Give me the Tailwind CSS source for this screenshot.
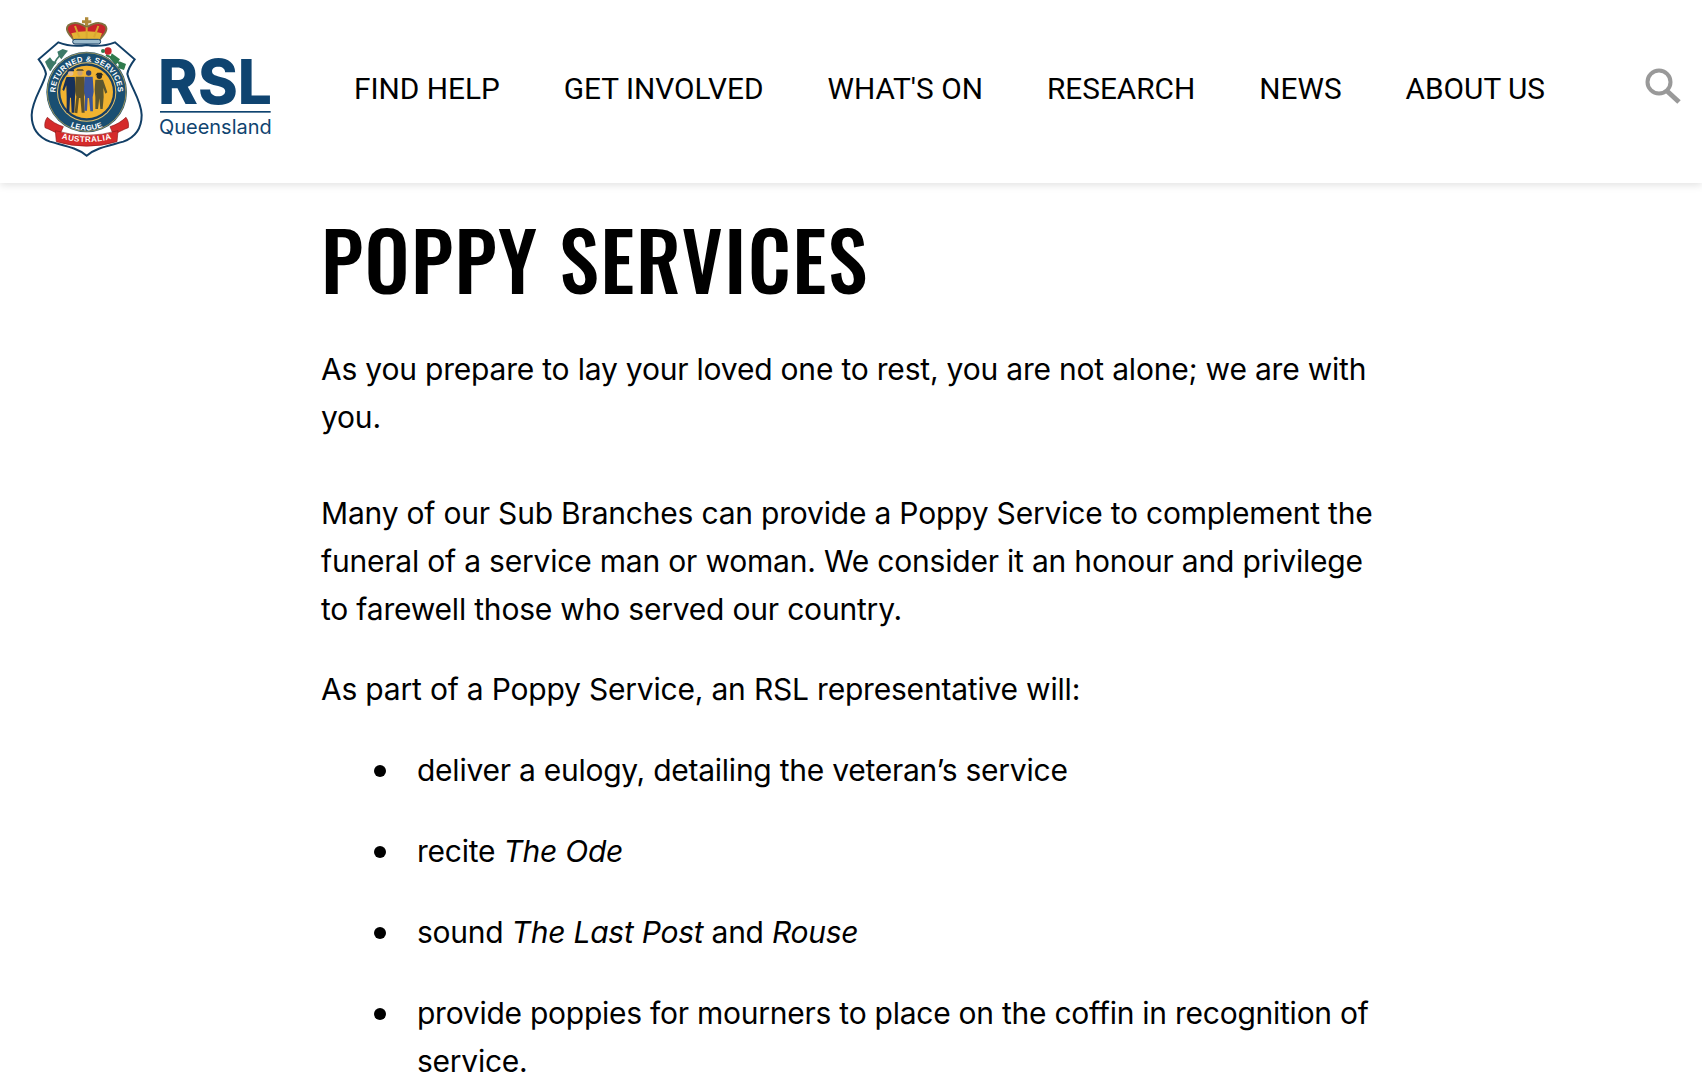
<!DOCTYPE html>
<html lang="en">
<head>
    <meta charset="UTF-8">
    <meta name="viewport" content="width=device-width, initial-scale=1.0">
    <title>Poppy Services - RSL Queensland</title>
    <script src="https://cdn.jsdelivr.net/npm/@tailwindcss/browser@4"></script>
</head>
<body class="bg-white text-black h-[1080px] overflow-hidden font-['Inter',sans-serif]">
    <header class="relative z-10 h-[183px] bg-white flex items-center shadow-[0_2px_8px_rgba(0,0,0,0.12)]">
        <!-- logo: coords are 3x so they line up with the reference crops -->
        <svg class="shrink-0 w-[300px] h-[183px]" viewBox="0 0 900 549">
            <defs>
                <path id="ringTop" d="M168 298 A94 94 0 1 1 352 298"/>
                <path id="ringBottom" d="M163 336 A113 113 0 0 0 357 336"/>
                <path id="ribbon" d="M176 414 Q260 438 344 414"/>
            </defs>
            <!-- crown -->
            <path d="M255 52 h10 v9 h9 v9 h-9 v12 h-10 v-12 h-9 v-9 h9 z" fill="#b08a3a"/>
            <path d="M222 120 C206 102 194 88 205 76 C222 62 245 72 260 82 C275 72 298 62 315 76 C326 88 314 102 298 120 Z" fill="#c8242b" stroke="#80713f" stroke-width="6"/>
            <path d="M214 100 C240 92 280 92 306 100 L298 120 L222 120 Z" fill="#e4b435"/>
            <path d="M260 82 L260 118 M225 78 L238 112 M295 78 L282 112" stroke="#d9a82f" stroke-width="6"/>
            <rect x="218" y="118" width="84" height="14" rx="7" fill="#9dbccd" stroke="#173f63" stroke-width="3"/>
            <!-- shield -->
            <path d="M260 135 C230 140 200 137 175 127 L116 178 C128 194 136 208 138 222 C128 262 96 300 95 345 C95 385 115 412 150 425 C190 437 230 442 260 467 C290 442 330 437 370 425 C405 412 425 385 425 345 C424 300 392 262 382 222 C384 208 392 194 404 178 L345 127 C320 137 290 140 260 135 Z" fill="#fff" stroke="#123f66" stroke-width="6"/>
            <!-- thistle and rose sprays -->
            <path d="M150 212 L170 178 L192 152" stroke="#3d7a68" stroke-width="5" fill="none"/>
            <path d="M135 185 L150 172 L158 182 L170 188 L158 200 L150 212 L142 200 Z" fill="#3d7a68"/>
            <path d="M172 155 L188 147 L204 152 L194 164 L184 178 L176 168 Z" fill="#3d7a68"/>
            <path d="M318 165 L345 178 L372 204" stroke="#2f7a4d" stroke-width="6" fill="none"/>
            <circle cx="324" cy="153" r="11" fill="#c8242b"/>
            <circle cx="309" cy="153" r="6" fill="#2f7a4d"/>
            <path d="M335 160 L360 178 L348 194 L330 176 Z" fill="#2f7a4d"/>
            <path d="M358 184 L378 192 L372 210 L354 204 Z" fill="#2f7a4d"/>
            <!-- roundel -->
            <circle cx="260" cy="276" r="121" fill="#1a4f72"/>
            <circle cx="260" cy="276" r="118" fill="none" stroke="#d9b24a" stroke-width="2"/>
            <circle cx="260" cy="276" r="89" fill="#e9c46a"/>
            <circle cx="260" cy="276" r="86" fill="#173f63"/>
            <circle cx="260" cy="276" r="79" fill="#f2b330"/>
            <text font-family="Liberation Sans" font-weight="700" font-size="23" letter-spacing="1" fill="#fff"><textPath href="#ringTop" startOffset="50%" text-anchor="middle">RETURNED &amp; SERVICES</textPath></text>
            <text font-family="Liberation Sans" font-weight="700" font-size="23" letter-spacing="1" fill="#fff"><textPath href="#ringBottom" startOffset="50%" text-anchor="middle">LEAGUE</textPath></text>
            <!-- four servicemen -->
            <circle cx="212" cy="220" r="8" fill="#e3bb8e"/>
            <rect x="202" y="208" width="20" height="6" rx="2" fill="#16305a"/>
            <g transform="translate(212 231)">
                <path d="M-12 0 L12 0 L15 40 L13 60 L11 107 L3 107 L1 62 L-2 62 L-4 107 L-12 107 L-12 60 L-13 25 L-20 42 L-25 38 L-14 3 Z" fill="#16305a"/>
            </g>
            <circle cx="240" cy="219" r="8" fill="#c89f70"/>
            <path d="M228 213 L252 213 L248 207 L232 207 Z" fill="#6a5a2e"/>
            <g transform="translate(240 230)">
                <path d="M-13 0 L13 0 L16 45 L12 60 L14 108 L5 108 L1 64 L-3 64 L-8 110 L-16 108 L-11 60 L-15 42 Z" fill="#5f5228"/>
            </g>
            <circle cx="266" cy="219" r="8" fill="#2f3f6b"/>
            <g transform="translate(266 230)">
                <path d="M-12 0 L12 0 L15 45 L12 62 L13 104 L5 104 L1 64 L-3 64 L-5 102 L-13 102 L-11 60 L-14 42 Z" fill="#39549a"/>
            </g>
            <circle cx="298" cy="229" r="8" fill="#2a2a22"/>
            <path d="M286 226 L310 226 L304 218 L292 218 Z" fill="#2a2a22"/>
            <g transform="translate(298 239)">
                <path d="M-12 0 L11 0 L24 38 L18 42 L12 24 L13 52 L10 88 L3 88 L0 56 L-4 88 L-12 88 L-12 52 L-14 30 Z" fill="#5c5630"/>
            </g>
            <!-- ribbon -->
            <path d="M142 352 C135 362 133 372 135 383 C150 388 165 398 180 403 L190 380 C170 374 155 364 142 352 Z" fill="#d52b2b" stroke="#8f1d1d" stroke-width="2"/>
            <path d="M378 352 C385 362 387 372 385 383 C370 388 355 398 340 403 L330 380 C350 374 365 364 378 352 Z" fill="#d52b2b" stroke="#8f1d1d" stroke-width="2"/>
            <path d="M166 392 Q260 420 354 392 L351 425 Q260 452 169 425 Z" fill="#d52b2b" stroke="#8f1d1d" stroke-width="2"/>
            <text font-family="Liberation Sans" font-weight="700" font-size="24" letter-spacing="1.5" fill="#fff"><textPath href="#ribbon" startOffset="50%" text-anchor="middle">AUSTRALIA</textPath></text>
            <!-- wordmark -->
            <text x="474" y="312" font-family="Inter" font-weight="800" font-size="184" fill="#0f4470" textLength="342" lengthAdjust="spacingAndGlyphs">RSL</text>
            <rect x="480" y="333" width="332" height="5" fill="#0f4470"/>
            <text x="477" y="403" font-family="Inter" font-size="60" fill="#0f4470" textLength="338" lengthAdjust="spacingAndGlyphs">Queensland</text>
        </svg>
        <nav class="ml-[54px] mb-[6px] flex gap-[64px] text-[29.8px] leading-none font-['Roboto',sans-serif]">
            <a href="#">FIND HELP</a>
            <a href="#">GET INVOLVED</a>
            <a href="#">WHAT'S ON</a>
            <a href="#">RESEARCH</a>
            <a href="#">NEWS</a>
            <a href="#">ABOUT US</a>
        </nav>
        <button class="ml-auto mr-[21px] mb-[12px]">
            <svg class="w-[36px] h-[36px] block" viewBox="0 0 36 36" fill="none" stroke="#999" stroke-width="4">
                <circle cx="14" cy="14" r="11.5"/>
                <path d="M22 23 L34 34" stroke-width="5"/>
            </svg>
        </button>
    </header>

    <main class="pl-[321px] w-[1385px] text-[30px] leading-[48px] tracking-[-0.2px]">
        <h1 class="mt-[20px] mb-[32px] text-[80px] leading-[110px] font-medium tracking-[1.4px] font-['Oswald','Roboto_Condensed',sans-serif]">POPPY SERVICES</h1>
        <p class="mb-[48px]">As you prepare to lay your loved one to rest, you are not alone; we are with you.</p>
        <p class="mb-[32px]">Many of our Sub Branches can provide a Poppy Service to complement the funeral of a service man or woman. We consider it an honour and privilege to farewell those who served our country.</p>
        <p class="mb-[33px]">As part of a Poppy Service, an RSL representative will:</p>
        <ul class="flex flex-col gap-[33px] tracking-[-0.25px]">
            <li class="flex">
                <span class="shrink-0 ml-[53px] mr-[31px] mt-[19px] w-[12px] h-[12px] rounded-full bg-black"></span>
                <div>deliver a eulogy, detailing the veteran’s service</div>
            </li>
            <li class="flex">
                <span class="shrink-0 ml-[53px] mr-[31px] mt-[19px] w-[12px] h-[12px] rounded-full bg-black"></span>
                <div>recite <em>The Ode</em></div>
            </li>
            <li class="flex">
                <span class="shrink-0 ml-[53px] mr-[31px] mt-[19px] w-[12px] h-[12px] rounded-full bg-black"></span>
                <div>sound <em>The Last Post</em> and <em>Rouse</em></div>
            </li>
            <li class="flex">
                <span class="shrink-0 ml-[53px] mr-[31px] mt-[19px] w-[12px] h-[12px] rounded-full bg-black"></span>
                <div>provide poppies for mourners to place on the coffin in recognition of service.</div>
            </li>
        </ul>
    </main>
</body>
</html>
